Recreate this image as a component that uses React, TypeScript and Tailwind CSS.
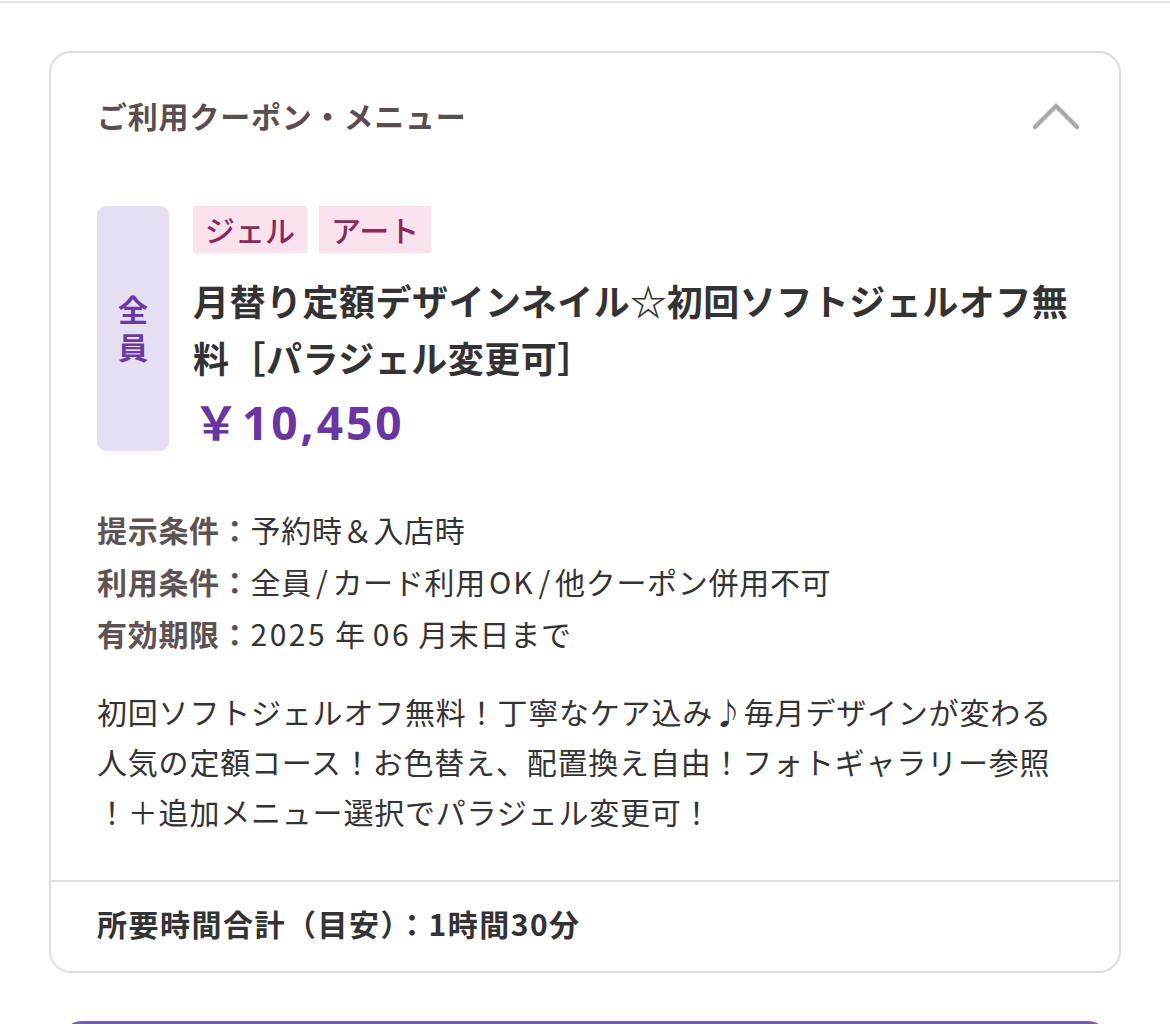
import React from "react";

const jp = { fontFamily: '"Noto Sans CJK JP", "Noto Sans", sans-serif' };

function Slash() {
  return <span className="px-[4px]">/</span>;
}

export default function App() {
  return (
    <div className="w-[1170px] min-h-[1024px] bg-white overflow-hidden" style={jp}>
      <div className="h-[2px] mt-[1px] bg-[#e6e6e6]" />
      <div className="mt-[48px] mx-[49px] w-[1072px] border-2 border-[#dcdcdc] rounded-[22px] bg-white">
        <div className="px-[46px] pt-[39px]">
          <div className="flex items-center justify-between h-[46px]">
            <h2 className="text-[30px] leading-[46px] font-bold text-[#5a4e4e] tracking-[0.8px]">
              ご利用クーポン・メニュー
            </h2>
            <svg width="50" height="30" viewBox="0 0 50 30" className="mr-[-8px] mt-[2px]">
              <polyline
                points="4,26 25,5 46,26"
                fill="none"
                stroke="#aaaaaa"
                strokeWidth="4.5"
                strokeLinecap="round"
                strokeLinejoin="round"
              />
            </svg>
          </div>

          <div className="mt-[68px] flex gap-[24px]">
            <div className="w-[72px] h-[245px] shrink-0 rounded-[9px] bg-[#e6def2] flex items-center justify-center">
              <span className="text-[30px] leading-[40px] font-bold text-[#6a3aa0] tracking-[8px] [writing-mode:vertical-rl] mt-[8px]">
                全員
              </span>
            </div>
            <div className="flex-1 min-w-0">
              <div className="flex gap-[12px]">
                <span className="h-[47px] px-[12px] bg-[#f9e1ee] text-[#8a2a5b] text-[30px] leading-[47px] font-medium">
                  ジェル
                </span>
                <span className="h-[47px] px-[12px] bg-[#f9e1ee] text-[#8a2a5b] text-[30px] leading-[47px] font-medium">
                  アート
                </span>
              </div>
              <p className="mt-[19px] text-[36px] leading-[57px] font-bold text-[#333333] tracking-[0.5px]">
                月替り定額デザインネイル☆初回ソフトジェルオフ無料［パラジェル変更可］
              </p>
              <p
                className="mt-[6px] text-[46px] leading-[56px] font-bold text-[#6935a3] tracking-[3px]"
                style={{ fontFamily: '"Noto Sans", "Noto Sans CJK JP", sans-serif' }}
              >
                <span style={jp}>￥</span>10,450
              </p>
            </div>
          </div>

          <div className="mt-[52px] text-[30px] leading-[52px] tracking-[0.7px]">
            <div>
              <span className="font-bold text-[#5e5252]">提示条件：</span>
              <span className="text-[#333333]">予約時＆入店時</span>
            </div>
            <div>
              <span className="font-bold text-[#5e5252]">利用条件：</span>
              <span className="text-[#333333]">
                全員<Slash />カード利用<span className="tracking-[2px] ml-[3px]">OK</span><Slash />他クーポン併用不可
              </span>
            </div>
            <div>
              <span className="font-bold text-[#5e5252]">有効期限：</span>
              <span className="text-[#333333]">
                <span className="tracking-[2.5px] mr-[8px]">2025</span>年
                <span className="tracking-[2.5px] mx-[7px]">06</span>月末日まで
              </span>
            </div>
          </div>

          <p className="mt-[27px] pb-[44px] text-[30px] leading-[50px] text-[#333333] tracking-[0.8px] [line-break:anywhere]">
            初回ソフトジェルオフ無料！丁寧なケア込み♪毎月デザインが変わる人気の定額コース！お色替え、配置換え自由！フォトギャラリー参照！＋追加メニュー選択でパラジェル変更可！
          </p>
        </div>
        <div className="h-[2px] bg-[#dedede]" />
        <div className="px-[46px] pt-[19px] pb-[26px]">
          <p className="text-[30px] leading-[44px] font-bold text-[#333333] tracking-[1.5px]">
            所要時間合計（目安）：1時間30分
          </p>
        </div>
      </div>
      <div className="mt-[48px] mx-[60px] h-[40px] rounded-t-[22px] bg-[#7b5aa6]" />
    </div>
  );
}
